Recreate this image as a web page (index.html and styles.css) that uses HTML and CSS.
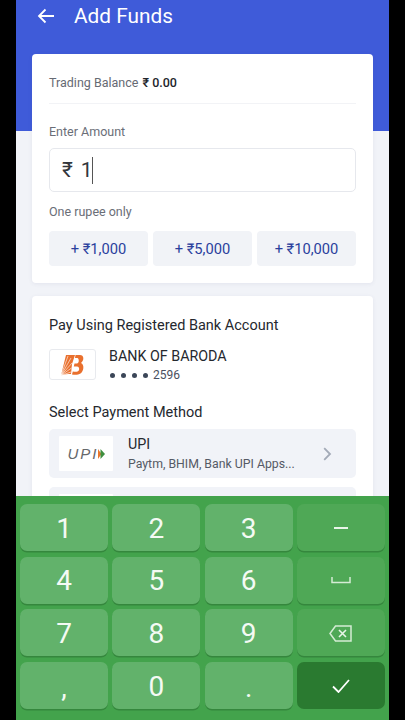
FILE: index.html
```html
<!DOCTYPE html>
<html lang="en">
<head>
<meta charset="utf-8">
<title>Add Funds</title>
<link rel="stylesheet" href="styles.css">
</head>
<body>
<div class="phone">
  <header class="topbar">
    <svg class="back" viewBox="0 0 18 16" width="18" height="16"><path d="M17 8H2M8.500 1.500 2 8l6.500 6.500" fill="none" stroke="#fff" stroke-width="1.800"/></svg>
    <h1 class="title">Add Funds</h1>
  </header>
  <main class="content">
    <section class="card card-amount">
      <div class="balance"><span class="balance-label">Trading Balance</span> <strong class="balance-value">₹ 0.00</strong></div>
      <label class="field-label">Enter Amount</label>
      <div class="amount-box"><span class="rupee">₹</span><span class="amount">1</span><span class="caret"></span></div>
      <p class="hint">One rupee only</p>
      <div class="quick">
        <button class="quick-btn">+ ₹1,000</button>
        <button class="quick-btn">+ ₹5,000</button>
        <button class="quick-btn">+ ₹10,000</button>
      </div>
    </section>
    <section class="card card-pay">
      <h2 class="section-title">Pay Using Registered Bank Account</h2>
      <div class="bank">
        <div class="bank-logo">
          <svg viewBox="0 0 24 22" width="24" height="22">
            <path d="M5 1h9l-3 9-1 10c-3 0-7 0-10 1.500Z" fill="#e9702e"/>
            <path d="M0 21.500 7 2M0 21.500 10 4M0 21.500 11 9M0 21.500 10.500 14M0 21.500 10 18" stroke="#fff" stroke-width=".6" fill="none"/>
            <path d="M14.500 1H19c4 0 4.500 5 1 8 3.500 1.500 3 8-.500 10.500-2 1.500-6 1.500-8.500 1l.8-3c3 .5 5 .5 6-1 1-2 0-4-2-4h-3l.7-3h2.500c2 0 2.500-4.500 .5-5.500h-2.500Z" fill="#e9702e"/>
          </svg>
        </div>
        <div class="bank-info">
          <div class="bank-name">BANK OF BARODA</div>
          <div class="bank-acct"><span class="dots"><i></i><i></i><i></i><i></i></span>2596</div>
        </div>
      </div>
      <h2 class="section-title method-title">Select Payment Method</h2>
      <div class="method">
        <div class="method-logo">
          <span class="upi-text">UPI</span>
          <svg class="upi-mark" viewBox="0 0 7 10" width="7" height="10"><path d="M0 0 3.500 5 0 10Z" fill="#e9772c"/><path d="M2.500 0 7 5 2.500 10Z" fill="#3f8f3f"/></svg>
        </div>
        <div class="method-info">
          <div class="method-name">UPI</div>
          <div class="method-desc">Paytm, BHIM, Bank UPI Apps...</div>
        </div>
        <svg class="chev" viewBox="0 0 9 14" width="9" height="14"><path d="M1.200 1.200 7 7l-5.800 5.800" fill="none" stroke="#a3aab7" stroke-width="1.800"/></svg>
      </div>
      <div class="method method-next"><div class="method-logo"></div></div>
    </section>
  </main>
  <div class="keyboard">
    <button class="key">1</button><button class="key">2</button><button class="key">3</button>
    <button class="key key-fn"><span class="minus"></span></button>
    <button class="key">4</button><button class="key">5</button><button class="key">6</button>
    <button class="key key-fn"><svg viewBox="0 0 20 7" width="20" height="7"><path d="M1 0v5.500h18V0" fill="none" stroke="#d5ecd5" stroke-width="1.500"/></svg></button>
    <button class="key">7</button><button class="key">8</button><button class="key">9</button>
    <button class="key key-fn"><svg viewBox="0 0 23 17" width="23" height="17"><path d="M6.500 1H22v15H6.500L1 8.500Z" fill="none" stroke="#d5ecd5" stroke-width="1.500"/><path d="M10 5l7 7M17 5l-7 7" stroke="#e8f5e8" stroke-width="1.600"/></svg></button>
    <button class="key key-low">,</button><button class="key">0</button><button class="key key-low">.</button>
    <button class="key key-done"><svg viewBox="0 0 18 14" width="18" height="14"><path d="M1 7.500 6.500 13 17 1" fill="none" stroke="#fff" stroke-width="1.800"/></svg></button>
  </div>
</div>
</body>
</html>
```
FILE: styles.css
```css
* { box-sizing: border-box; }
html, body { margin: 0; height: 100%; background: #000; }
body { display: flex; justify-content: center; font-family: Roboto, "Noto Sans", sans-serif; }
.phone {
  position: relative;
  width: 373px;
  height: 720px;
  overflow: hidden;
  background: linear-gradient(#3f5bd9 131px, #f1f3f8 131px);
}
.topbar { display: flex; align-items: center; height: 32px; padding-left: 21px; }
.back { flex: none; }
.title { margin: 0 0 0 19px; font-size: 20.800px; font-weight: 400; color: #fff; line-height: 32px; }
.content { display: flex; flex-direction: column; gap: 13px; padding: 22px 16px 0; }
.card { background: #fff; border-radius: 4px; padding: 0 17px; box-shadow: 0 1px 4px rgba(60, 70, 110, .08); }
.card-amount { height: 229px; }
.balance { height: 50px; padding-top: 20px; border-bottom: 1px solid #f2f3f6; font-size: 12.500px; line-height: 17px; white-space: nowrap; }
.balance-label { color: #666a73; }
.balance-value { color: #22252b; font-weight: 500; margin-left: 1px; }
.field-label { display: block; margin-top: 19px; color: #6a6e77; font-size: 12.500px; line-height: 17px; }
.amount-box { display: flex; align-items: center; height: 44px; margin-top: 8px; padding-left: 12px; border: 1px solid #e6e8ed; border-radius: 5px; color: #33363c; font-size: 21px; }
.amount { margin-left: 8px; }
.caret { width: 1px; height: 27px; margin-left: -1px; background: #555; }
.hint { margin: 11px 0 0; color: #6a6e77; font-size: 12.500px; line-height: 17px; }
.quick { display: flex; gap: 5px; margin-top: 11px; }
.quick-btn { flex: 1 1 0; height: 35px; padding: 0; border: 0; border-radius: 4px; background: #f1f3f7; color: #2a3f9d; font-family: inherit; font-size: 14.700px; white-space: nowrap; }
.card-pay { height: 300px; padding-top: 21px; }
.section-title { margin: 0; color: #25282e; font-size: 14.500px; font-weight: 400; line-height: 18px; }
.bank { display: flex; align-items: center; gap: 13px; margin-top: 12px; }
.bank-logo { display: flex; align-items: center; justify-content: center; flex: none; width: 47px; height: 31px; border: 1px solid #e8eaee; border-radius: 3px; background: #fff; }
.bank-name { color: #25282e; font-size: 14.300px; line-height: 18px; }
.bank-acct { display: flex; align-items: center; margin-top: 3px; color: #4a5060; font-size: 12px; line-height: 14px; }
.dots { display: flex; gap: 6px; margin: 0 5px 0 1px; }
.dots i { width: 5px; height: 5px; border-radius: 50%; background: #3b4658; }
.method-title { margin-top: 22px; }
.method { display: flex; align-items: center; height: 49px; margin-top: 7px; padding: 0 10px; border-radius: 5px; background: #f1f3f8; }
.method-logo { display: flex; align-items: center; justify-content: center; flex: none; width: 54px; height: 35px; background: #fff; border-radius: 1px; }
.upi-text { color: #66686b; font-size: 15px; font-style: italic; font-weight: 400; letter-spacing: 2px; font-family: "Liberation Sans", sans-serif; }
.upi-mark { margin-left: -1px; }
.method-info { flex: 1; margin-left: 15px; }
.method-name { color: #25282e; font-size: 14.300px; line-height: 18px; margin-bottom: 3px; }
.method-desc { color: #555a65; font-size: 12.300px; line-height: 16px; }
.chev { margin-right: 14px; }
.method-next { margin-top: 9px; }
.keyboard {
  position: absolute;
  left: 0; right: 0; bottom: 0;
  height: 224px;
  display: grid;
  grid-template-columns: repeat(4, 88px);
  grid-auto-rows: 47px;
  gap: 5.700px 4.300px;
  padding: 8px 4px 0;
  background: #43a34c;
}
.key { padding: 1px 0 0; border: 0; border-radius: 7px; background: #62b26b; box-shadow: 0 1.500px 0 #35873d; color: #f4faf4; font-family: inherit; font-size: 28px; font-weight: 400; display: flex; align-items: center; justify-content: center; }
.key-fn { background: #4fa856; }
.key-low { align-items: flex-end; padding: 0 0 5px; }
.key-done { background: #2a7a30; box-shadow: none; }
.minus { width: 14px; height: 2px; background: #e8f5e8; }
```
